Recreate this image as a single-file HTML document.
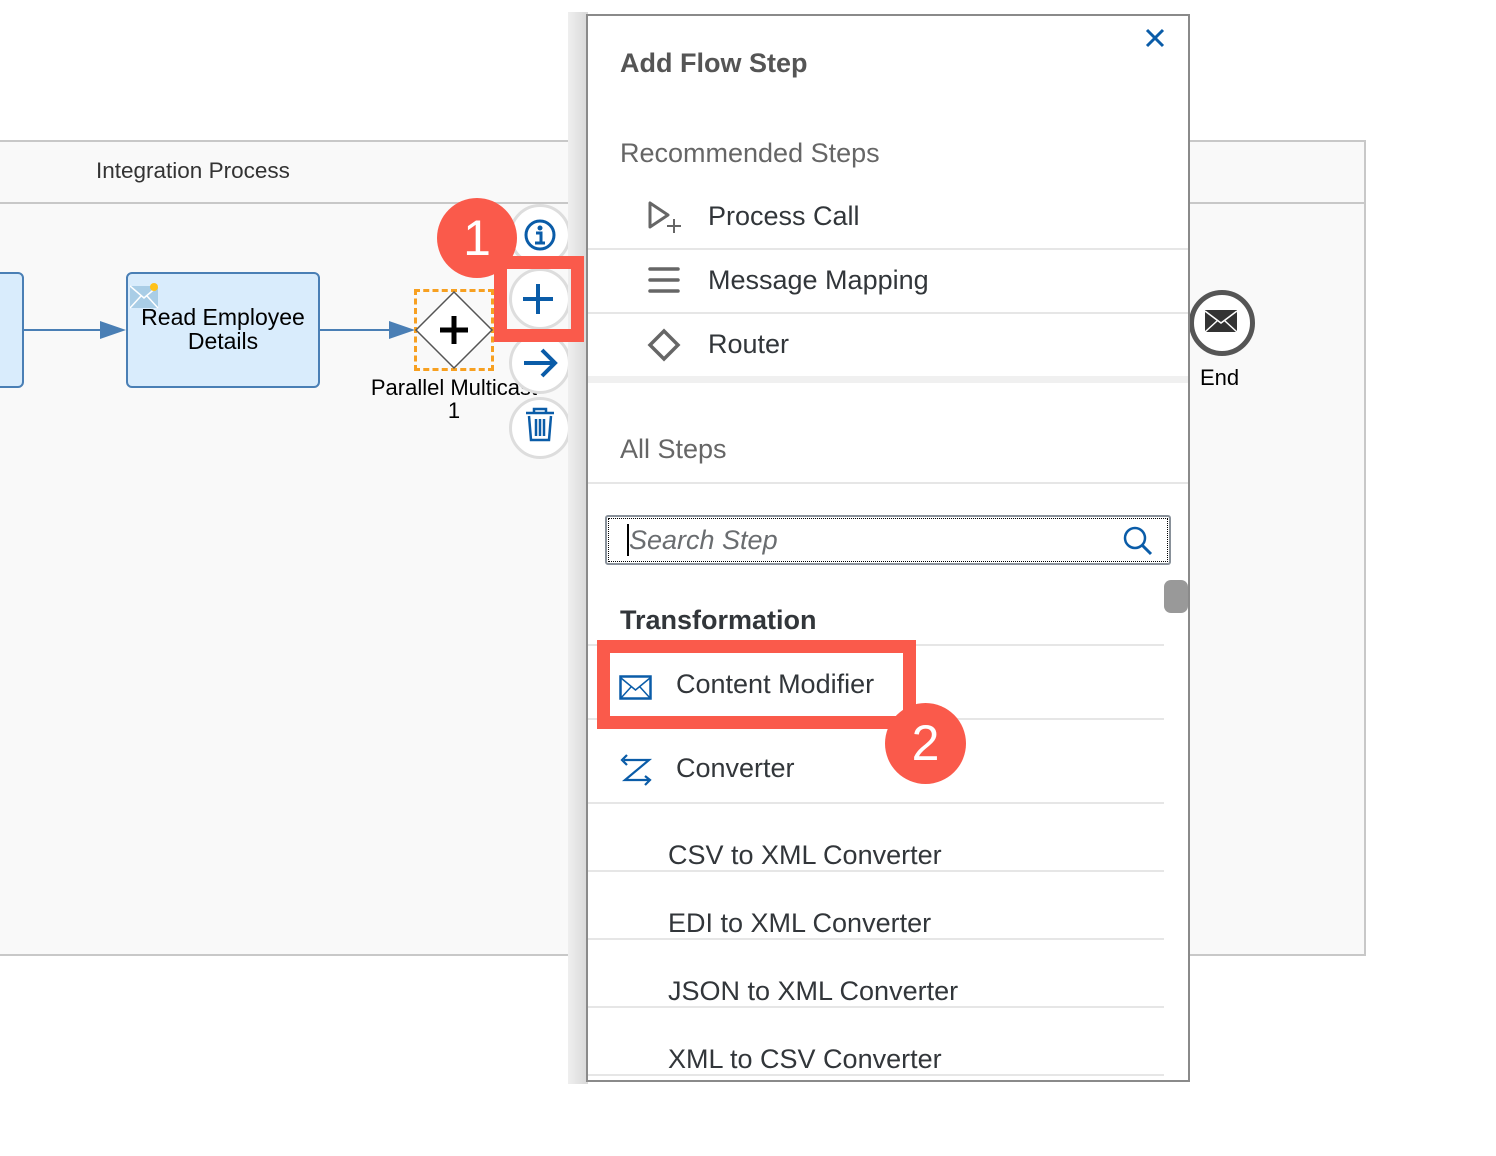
<!DOCTYPE html>
<html><head><meta charset="utf-8">
<style>
*{margin:0;padding:0;box-sizing:border-box}
body{width:1496px;height:1156px;background:#fff;position:relative;overflow:hidden;font-family:"Liberation Sans",Arial,sans-serif}
.a{position:absolute}
.t{position:absolute;white-space:nowrap}
.sap{font-family:"Liberation Sans",sans-serif}
.line{position:absolute;height:2px;background:#e6e6e6}
.item{font-size:27px;color:#32363a}
</style></head><body>
<div class="a" style="left:-2px;top:140px;width:1368px;height:816px;background:#f9f9f9;border:2px solid #c8c8c8"></div>
<div class="a" style="left:0;top:202px;width:1366px;height:2px;background:#c8c8c8"></div>
<div class="t" style="left:96px;top:158px;font-size:22.5px;color:#333">Integration Process</div>

<div class="a" style="left:-10px;top:272px;width:34px;height:116px;background:#d9ecfc;border:2px solid #4a7fb5;border-radius:6px"></div>
<svg class="a" style="left:0;top:0" width="600" height="480">
 <line x1="24" y1="330" x2="104" y2="330" stroke="#4a7fb5" stroke-width="2"/>
 <polygon points="100,321 126,330 100,339" fill="#4a7fb5"/>
 <line x1="320" y1="330" x2="392" y2="330" stroke="#4a7fb5" stroke-width="2"/>
 <polygon points="389,321 415,330 389,339" fill="#4a7fb5"/>
</svg>
<div class="a" style="left:126px;top:272px;width:194px;height:116px;background:#d9ecfc;border:2px solid #4a7fb5;border-radius:6px"></div>
<svg class="a" style="left:130px;top:282px" width="32" height="28"><rect x="0" y="4" width="28" height="22" fill="#a9cde6"/><path d="M0 4 L14 16 L28 4 M0 26 L11 14 M28 26 L17 14" stroke="#fff" stroke-width="1.5" fill="none"/><circle cx="24" cy="5" r="4" fill="#ffc21a"/></svg>
<div class="t" style="left:126px;width:194px;text-align:center;top:305px;font-size:23px;line-height:24px;color:#000">Read Employee<br>Details</div>

<div class="a" style="left:414px;top:289px;width:80px;height:82px;border:3px dashed #f7a021"></div>
<svg class="a" style="left:410px;top:286px" width="90" height="90">
 <polygon points="44,6 82,44 44,82 6,44" fill="#fff" stroke="#555" stroke-width="1.5"/>
 <path d="M44 30 V58 M30 44 H58" stroke="#000" stroke-width="5"/>
</svg>
<div class="t" style="left:354px;width:200px;text-align:center;top:376px;font-size:22px;line-height:23px;color:#000">Parallel Multicast<br>1</div>

<div class="a" style="left:509px;top:204px;width:62px;height:62px;border-radius:50%;background:#fff;border:3px solid #ddd"></div>
<div class="a" style="left:509px;top:268px;width:62px;height:62px;border-radius:50%;background:#fff;border:3px solid #ddd"></div>
<div class="a" style="left:509px;top:332px;width:62px;height:62px;border-radius:50%;background:#fff;border:3px solid #ddd"></div>
<div class="a" style="left:509px;top:397px;width:62px;height:62px;border-radius:50%;background:#fff;border:3px solid #ddd"></div>
<svg class="a" style="left:500px;top:200px" width="80" height="270">
 <circle cx="40" cy="35" r="14" fill="none" stroke="#0a5ca8" stroke-width="3"/>
 <circle cx="40" cy="28" r="2.5" fill="#0a5ca8"/>
 <path d="M36 33 H41 V43 M35 43 H45" stroke="#0a5ca8" stroke-width="3" fill="none"/>
 <path d="M38 84 V114 M23 99 H53" stroke="#0a5ca8" stroke-width="4"/>
 <path d="M24 163 H54 M42 150 L55 163 L42 176" stroke="#0a5ca8" stroke-width="4" fill="none"/>
 <path d="M26 213 H54 M34 213 V209 H46 V213 M29 216 L31 240 H49 L51 216 M36 219 V236 M40 219 V236 M44 219 V236" stroke="#0a5ca8" stroke-width="2.5" fill="none"/>
</svg>

<div class="a" style="left:1189px;top:290px;width:66px;height:66px;border-radius:50%;background:#fff;border:5px solid #555"></div>
<svg class="a" style="left:1205px;top:310px" width="34" height="24"><rect x="0" y="0" width="32" height="22" fill="#333"/><path d="M0 1 L16 13 L32 1 M0 22 L12 11 M32 22 L20 11" stroke="#fff" stroke-width="1.5" fill="none"/></svg>
<div class="t" style="left:1200px;top:365px;font-size:22px;color:#000">End</div>

<div class="a" style="left:568px;top:12px;width:20px;height:1072px;background:linear-gradient(90deg,#efefef,#d8d8d8)"></div>
<div class="a" style="left:586px;top:14px;width:604px;height:1068px;background:#fff;border:2px solid #8a8a8a"></div>
<svg class="a" style="left:1144px;top:27px" width="22" height="22"><path d="M3 3 L19 19 M19 3 L3 19" stroke="#0a5ca8" stroke-width="3"/></svg>
<div class="t sap" style="left:620px;top:48px;font-size:27px;font-weight:bold;color:#555">Add Flow Step</div>
<div class="t sap" style="left:620px;top:138px;font-size:27px;color:#666">Recommended Steps</div>

<svg class="a" style="left:640px;top:195px" width="50" height="170">
 <path d="M10 8 V32 L28 20 Z" fill="none" stroke="#666" stroke-width="3" stroke-linejoin="round"/>
 <path d="M34 24 V38 M27 31 H41" stroke="#666" stroke-width="2"/>
 <path d="M10 74 H38 M10 85 H38 M10 96 H38" stroke="#666" stroke-width="3.5" stroke-linecap="round"/>
 <polygon points="24,136 38,150 24,164 10,150" fill="none" stroke="#666" stroke-width="3.5"/>
</svg>
<div class="t item sap" style="left:708px;top:201px">Process Call</div>
<div class="line" style="left:588px;top:248px;width:600px"></div>
<div class="t item sap" style="left:708px;top:265px">Message Mapping</div>
<div class="line" style="left:588px;top:312px;width:600px"></div>
<div class="t item sap" style="left:708px;top:329px">Router</div>
<div class="line" style="left:588px;top:376px;width:600px;height:7px;background:#f0f0f0"></div>

<div class="t sap" style="left:620px;top:434px;font-size:27px;color:#666">All Steps</div>
<div class="line" style="left:588px;top:482px;width:600px"></div>

<div class="a" style="left:605px;top:515px;width:566px;height:50px;border:2px solid #89919a;border-radius:3px;background:#fff"></div>
<div class="a" style="left:608px;top:518px;width:560px;height:44px;border:1.5px dotted #000"></div>
<div class="a" style="left:627px;top:524px;width:1.5px;height:32px;background:#000"></div>
<div class="t sap" style="left:629px;top:525px;font-size:27px;font-style:italic;color:#6a6d70">Search Step</div>
<svg class="a" style="left:1122px;top:525px" width="32" height="32"><circle cx="13" cy="13" r="10" fill="none" stroke="#0a5ca8" stroke-width="2.5"/><path d="M20 20 L29 29" stroke="#0a5ca8" stroke-width="3"/></svg>

<div class="a" style="left:1164px;top:580px;width:24px;height:33px;background:#999;border-radius:7px"></div>

<div class="t sap" style="left:620px;top:605px;font-size:27px;font-weight:bold;color:#32363a">Transformation</div>
<div class="line" style="left:588px;top:644px;width:576px"></div>
<svg class="a" style="left:619px;top:675px" width="34" height="26"><rect x="1.5" y="1.5" width="30" height="22" fill="none" stroke="#0a5ca8" stroke-width="2.5"/><path d="M2 3 L16.5 15 L31 3 M2 23 L12 12 M31 23 L21 12" stroke="#0a5ca8" stroke-width="1.5" fill="none"/></svg>
<div class="t item sap" style="left:676px;top:669px">Content Modifier</div>
<div class="line" style="left:588px;top:718px;width:576px"></div>
<svg class="a" style="left:619px;top:752px" width="36" height="36"><path d="M5 8 L30 8 L6 28 L30 28 M8 3 L3 8 L8 13 M26 24 L31 28 L26 33" stroke="#0a5ca8" stroke-width="2.2" fill="none"/></svg>
<div class="t item sap" style="left:676px;top:753px">Converter</div>
<div class="line" style="left:588px;top:802px;width:576px"></div>
<div class="t item sap" style="left:668px;top:840px">CSV to XML Converter</div>
<div class="line" style="left:588px;top:870px;width:576px"></div>
<div class="t item sap" style="left:668px;top:908px">EDI to XML Converter</div>
<div class="line" style="left:588px;top:938px;width:576px"></div>
<div class="t item sap" style="left:668px;top:976px">JSON to XML Converter</div>
<div class="line" style="left:588px;top:1006px;width:576px"></div>
<div class="t item sap" style="left:668px;top:1044px">XML to CSV Converter</div>
<div class="line" style="left:588px;top:1074px;width:576px"></div>

<div class="a" style="left:494px;top:256px;width:90px;height:86px;border:13px solid #fa5a4b"></div>
<div class="a" style="left:437px;top:198px;width:80px;height:80px;border-radius:50%;background:#fa5a4b;color:#fff;font-size:50px;text-align:center;line-height:80px">1</div>
<div class="a" style="left:597px;top:640px;width:319px;height:89px;border:13px solid #fa5a4b"></div>
<div class="a" style="left:885px;top:703px;width:81px;height:81px;border-radius:50%;background:#fa5a4b;color:#fff;font-size:50px;text-align:center;line-height:81px">2</div>
</body></html>
